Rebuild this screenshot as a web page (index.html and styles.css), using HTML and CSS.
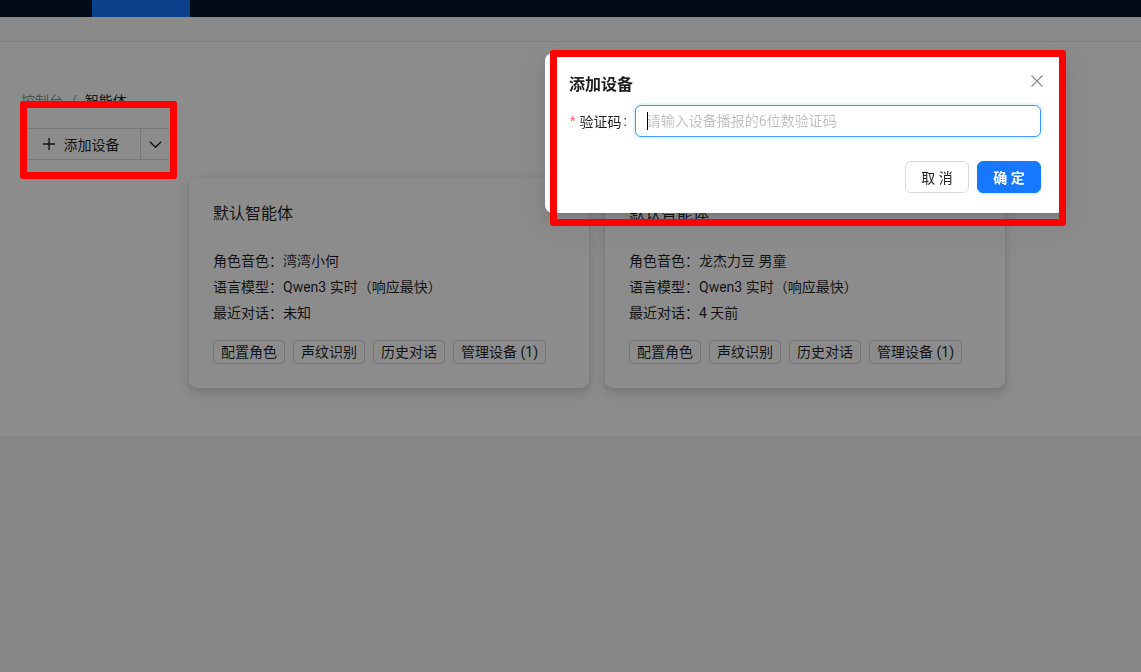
FILE: index.html
```html
<!DOCTYPE html>
<html lang="zh-CN">
<head>
<meta charset="utf-8">
<title>智能体</title>
<link rel="stylesheet" href="styles.css">
</head>
<body>
<header class="topnav">
  <div class="topnav-tab"></div>
</header>
<div class="subbar"></div>
<main class="content">
  <nav class="breadcrumb">
    <span class="crumb-link">控制台</span><span class="crumb-sep">/</span><span class="crumb-current">智能体</span>
  </nav>
  <div class="toolbar">
    <div class="btn-group">
      <button class="btn btn-main" type="button">
        <svg class="btn-icon" viewBox="0 0 14 14" width="14" height="14"><path d="M7 1v12M1 7h12" stroke="currentColor" stroke-width="1.3" fill="none"/></svg>
        <span>添加设备</span>
      </button>
      <button class="btn btn-drop" type="button">
        <svg viewBox="0 0 16 16" width="15" height="15"><path d="M2 5l6 6 6-6" stroke="currentColor" stroke-width="1.4" fill="none"/></svg>
      </button>
    </div>
  </div>
  <section class="cards">
    <article class="card">
      <h3 class="card-title">默认智能体</h3>
      <div class="card-info">
        <p>角色音色：湾湾小何</p>
        <p>语言模型：Qwen3 实时（响应最快）</p>
        <p>最近对话：未知</p>
      </div>
      <div class="card-actions">
        <button class="btn-sm" type="button">配置角色</button>
        <button class="btn-sm" type="button">声纹识别</button>
        <button class="btn-sm" type="button">历史对话</button>
        <button class="btn-sm" type="button">管理设备 (1)</button>
      </div>
    </article>
    <article class="card">
      <h3 class="card-title">默认智能体</h3>
      <div class="card-info">
        <p>角色音色：龙杰力豆 男童</p>
        <p>语言模型：Qwen3 实时（响应最快）</p>
        <p>最近对话：4 天前</p>
      </div>
      <div class="card-actions">
        <button class="btn-sm" type="button">配置角色</button>
        <button class="btn-sm" type="button">声纹识别</button>
        <button class="btn-sm" type="button">历史对话</button>
        <button class="btn-sm" type="button">管理设备 (1)</button>
      </div>
    </article>
  </section>
</main>

<div class="mask"></div>

<div class="modal">
  <div class="modal-header">
    <div class="modal-title">添加设备</div>
    <button class="modal-close" type="button" aria-label="关闭">
      <svg viewBox="0 0 12 12" width="12" height="12"><path d="M0.5 0.5l11 11M11.5 0.5l-11 11" stroke="currentColor" stroke-width="1.2" fill="none"/></svg>
    </button>
  </div>
  <div class="form-item">
    <label class="form-label"><span class="req">*</span>验证码</label>
    <div class="input-wrap">
      <input class="input" type="text" placeholder="请输入设备播报的6位数验证码">
      <span class="caret"></span>
    </div>
  </div>
  <div class="modal-footer">
    <button class="mbtn" type="button">取 消</button>
    <button class="mbtn mbtn-primary" type="button">确 定</button>
  </div>
</div>

<div class="mark mark-1"></div>
<div class="mark mark-2"></div>
</body>
</html>
```

FILE: styles.css
```css
* { box-sizing: border-box; }
html, body { margin: 0; padding: 0; }
body {
  width: 1141px;
  height: 672px;
  overflow: hidden;
  background: #f5f5f5;
  font-family: "Segoe UI", Roboto, "Noto Sans CJK SC", sans-serif;
  font-size: 14px;
  color: rgba(0, 0, 0, 0.88);
}
button { font-family: inherit; }

.topnav {
  height: 17px;
  background: #001529;
  display: flex;
}
.topnav-tab {
  margin-left: 92px;
  width: 98px;
  height: 17px;
  background: #1677ff;
}
.subbar {
  height: 25px;
  background: #fbfbfb;
  border-bottom: 1px solid #eeeeee;
}

.content {
  background: #ffffff;
  height: 395px;
  padding: 48px 0 0 21px;
  border-bottom: 1px solid #efefef;
}
.breadcrumb {
  line-height: 22px;
  font-size: 14px;
}
.crumb-link { color: rgba(0, 0, 0, 0.45); }
.crumb-sep { color: rgba(0, 0, 0, 0.45); margin: 0 8px; }
.crumb-current { color: rgba(0, 0, 0, 0.88); }

.toolbar {
  margin-top: 16px;
  display: flex;
}
.btn-group { display: flex; }
.btn {
  height: 32px;
  background: #fff;
  border: 1px solid #d9d9d9;
  color: rgba(0, 0, 0, 0.88);
  font-size: 14px;
  display: flex;
  align-items: center;
  justify-content: center;
  padding: 0;
  cursor: pointer;
}
.btn-main {
  width: 120px;
  padding-right: 1px;
  border-radius: 6px 0 0 6px;
  gap: 8px;
}
.btn-icon { display: block; }
.btn-drop {
  width: 31px;
  margin-left: -1px;
  border-radius: 0 6px 6px 0;
}

.cards {
  margin-top: 18px;
  margin-left: 168px;
  display: flex;
  gap: 16px;
}
.card {
  width: 400px;
  height: 210px;
  padding: 24px;
  background: #fff;
  border-radius: 8px;
  box-shadow: 0 1px 2px -2px rgba(0, 0, 0, 0.14), 0 3px 6px 0 rgba(0, 0, 0, 0.1), 0 5px 12px 4px rgba(0, 0, 0, 0.07);
}
.card-title {
  margin: 0;
  font-size: 16px;
  font-weight: 400;
  line-height: 24px;
  color: rgba(0, 0, 0, 0.88);
}
.card-info {
  margin-top: 24px;
  display: flex;
  flex-direction: column;
  gap: 4px;
}
.card-info p {
  margin: 0;
  line-height: 22px;
  color: rgba(0, 0, 0, 0.88);
}
.card-actions {
  margin-top: 16px;
  display: flex;
  gap: 8px;
}
.btn-sm {
  height: 24px;
  padding: 0 7px;
  font-size: 14px;
  line-height: 22px;
  background: #fff;
  border: 1px solid #d9d9d9;
  border-radius: 4px;
  color: rgba(0, 0, 0, 0.88);
}

.mask {
  position: fixed;
  inset: 0;
  background: rgba(0, 0, 0, 0.45);
}

.modal {
  position: absolute;
  left: 545px;
  top: 53px;
  width: 520px;
  height: 160px;
  background: #fff;
  border-radius: 8px;
  padding: 20px 24px;
  box-shadow: 0 6px 16px 0 rgba(0, 0, 0, 0.08), 0 3px 6px -4px rgba(0, 0, 0, 0.12), 0 9px 28px 8px rgba(0, 0, 0, 0.05);
}
.modal-header {
  display: flex;
  justify-content: space-between;
  margin-bottom: 8px;
}
.modal-title {
  font-size: 16px;
  font-weight: 600;
  line-height: 24px;
  color: rgba(0, 0, 0, 0.88);
}
.modal-close {
  position: absolute;
  top: 17px;
  right: 17px;
  width: 22px;
  height: 22px;
  padding: 0;
  border: 0;
  background: transparent;
  color: rgba(0, 0, 0, 0.45);
  display: flex;
  align-items: center;
  justify-content: center;
}
.form-item {
  display: flex;
  align-items: center;
  margin-bottom: 24px;
}
.form-label {
  display: flex;
  align-items: center;
  height: 32px;
  padding-left: 1px;
  font-size: 14px;
  color: rgba(0, 0, 0, 0.88);
}
.form-label::after {
  content: ":";
  margin: 0 8px 0 2px;
}
.req {
  color: #ff4d4f;
  margin-right: 4px;
  font-family: SimSun, "Liberation Sans", sans-serif;
}
.input-wrap {
  position: relative;
  flex: 1;
}
.input {
  display: block;
  width: 100%;
  height: 32px;
  padding: 4px 11px;
  border: 1px solid #4096ff;
  border-radius: 6px;
  box-shadow: 0 0 0 2px rgba(5, 145, 255, 0.1);
  font-family: inherit;
  font-size: 14px;
  outline: none;
  color: rgba(0, 0, 0, 0.88);
}
.input::placeholder { color: rgba(0, 0, 0, 0.25); }
.caret {
  position: absolute;
  left: 12px;
  top: 7px;
  width: 1px;
  height: 18px;
  background: #000;
}
.modal-footer {
  display: flex;
  justify-content: flex-end;
  gap: 8px;
}
.mbtn {
  width: 64px;
  height: 32px;
  border-radius: 6px;
  border: 1px solid #d9d9d9;
  background: #fff;
  font-size: 14px;
  color: rgba(0, 0, 0, 0.88);
  padding: 0;
}
.mbtn-primary {
  background: #1677ff;
  border-color: #1677ff;
  color: #fff;
  font-weight: 600;
  box-shadow: 0 2px 0 rgba(5, 145, 255, 0.1);
}

.mark {
  position: absolute;
  border: 7px solid #ff0000;
  border-radius: 3px;
}
.mark-1 { left: 20px; top: 101px; width: 157px; height: 78px; }
.mark-2 { left: 550px; top: 50px; width: 516px; height: 176px; }
```
